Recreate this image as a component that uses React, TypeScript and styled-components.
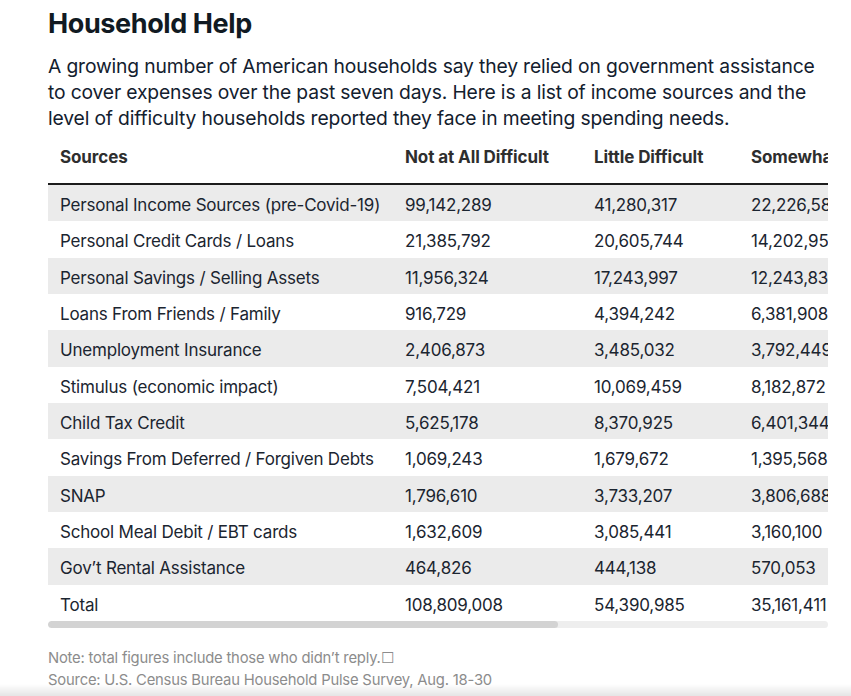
import React from 'react';
import styled, { createGlobalStyle } from 'styled-components';

interface IRow {
  source: string;
  values: string[];
}

const columns = ['Not at All Difficult', 'Little Difficult', 'Somewhat Difficult', 'Very Difficult'];

const rows: IRow[] = [
  { source: 'Personal Income Sources (pre-Covid-19)', values: ['99,142,289', '41,280,317', '22,226,581', '11,603,412'] },
  { source: 'Personal Credit Cards / Loans', values: ['21,385,792', '20,605,744', '14,202,957', '8,417,213'] },
  { source: 'Personal Savings / Selling Assets', values: ['11,956,324', '17,243,997', '12,243,830', '6,904,112'] },
  { source: 'Loans From Friends / Family', values: ['916,729', '4,394,242', '6,381,908', '5,338,716'] },
  { source: 'Unemployment Insurance', values: ['2,406,873', '3,485,032', '3,792,449', '3,101,597'] },
  { source: 'Stimulus (economic impact)', values: ['7,504,421', '10,069,459', '8,182,872', '5,013,664'] },
  { source: 'Child Tax Credit', values: ['5,625,178', '8,370,925', '6,401,344', '3,788,206'] },
  { source: 'Savings From Deferred / Forgiven Debts', values: ['1,069,243', '1,679,672', '1,395,568', '1,017,410'] },
  { source: 'SNAP', values: ['1,796,610', '3,733,207', '3,806,688', '3,522,934'] },
  { source: 'School Meal Debit / EBT cards', values: ['1,632,609', '3,085,441', '3,160,100', '2,448,012'] },
  { source: 'Gov\u2019t Rental Assistance', values: ['464,826', '444,138', '570,053', '622,471'] },
  { source: 'Total', values: ['108,809,008', '54,390,985', '35,161,411', '24,106,233'] },
];

const VIEW_WIDTH = 780;
const TABLE_WIDTH = 1193;

const App: React.FunctionComponent = () => (
  <Page>
    <GlobalStyle />
    <Title>Household Help</Title>
    <Intro>
      A growing number of American households say they relied on government assistance to cover expenses over the past
      seven days. Here is a list of income sources and the level of difficulty households reported they face in meeting
      spending needs.
    </Intro>
    <TableScroll>
      <Table>
        <colgroup>
          <col style={{ width: 345 }} />
          <col style={{ width: 189 }} />
          <col style={{ width: 157 }} />
          <col style={{ width: 250 }} />
          <col />
        </colgroup>
        <thead>
          <tr>
            <HeadCell>Sources</HeadCell>
            {columns.map((c) => (
              <HeadCell key={c}>{c}</HeadCell>
            ))}
          </tr>
        </thead>
        <tbody>
          {rows.map((r, i) => (
            <Row key={r.source} shaded={i % 2 === 0 && i < rows.length - 1}>
              <Cell>{r.source}</Cell>
              {r.values.map((v, j) => (
                <Cell key={j}>{v}</Cell>
              ))}
            </Row>
          ))}
        </tbody>
      </Table>
    </TableScroll>
    <ScrollTrack>
      <ScrollThumb style={{ width: (VIEW_WIDTH * VIEW_WIDTH) / TABLE_WIDTH }} />
    </ScrollTrack>
    <Notes>
      <Note>Note: total figures include those who didn{'\u2019'}t reply.{'\u2610'}</Note>
      <Note>Source: U.S. Census Bureau Household Pulse Survey, Aug. 18-30</Note>
    </Notes>
    <BottomShade />
  </Page>
);

const GlobalStyle = createGlobalStyle`
  body {
    margin: 0;
    background: #ffffff;
    font-family: Inter, "Noto Sans", sans-serif;
  }
`;

const Page = styled.div`
  width: ${VIEW_WIDTH}px;
  padding: 7px 0 0 48px;
`;

const Title = styled.h1`
  margin: 0;
  color: #111a22;
  font-size: 27px;
  font-weight: 700;
  line-height: 34px;
  letter-spacing: -0.4px;
`;

const Intro = styled.p`
  margin: 12px 0 0;
  color: #13202e;
  font-size: 19.3px;
  font-weight: 400;
  line-height: 26px;
  letter-spacing: -0.15px;
`;

const TableScroll = styled.div`
  width: ${VIEW_WIDTH}px;
  margin-top: 6px;
  overflow: hidden;
`;

const Table = styled.table`
  width: ${TABLE_WIDTH}px;
  border-collapse: collapse;
  table-layout: fixed;
`;

const HeadCell = styled.th`
  height: 40px;
  padding: 0 12px 6px;
  border-bottom: 2px solid #1c1c1c;
  color: #2e2e2e;
  font-size: 17px;
  font-weight: 700;
  text-align: left;
  white-space: nowrap;
  letter-spacing: -0.1px;
  vertical-align: middle;
`;

const Row = styled.tr<{ shaded: boolean }>`
  background: ${(p) => (p.shaded ? '#ebebeb' : '#ffffff')};
`;

const Cell = styled.td`
  height: 32.33px;
  padding: 4px 12px 0;
  color: #1b2530;
  font-size: 17px;
  font-weight: 400;
  white-space: nowrap;
  letter-spacing: -0.2px;
  vertical-align: middle;
`;

const ScrollTrack = styled.div`
  width: ${VIEW_WIDTH}px;
  height: 7px;
  border-radius: 4px;
  background: #eeeeee;
  overflow: hidden;
`;

const ScrollThumb = styled.div`
  height: 100%;
  border-radius: 4px;
  background: #d3d3d3;
`;

const Notes = styled.div`
  margin-top: 19px;
`;

const Note = styled.p`
  margin: 0;
  color: #8c8c8c;
  font-size: 14.8px;
  line-height: 22px;
  letter-spacing: -0.2px;
`;

const BottomShade = styled.div`
  position: fixed;
  left: 0;
  right: 0;
  bottom: 0;
  height: 12px;
  background: linear-gradient(to bottom, rgba(0, 0, 0, 0), rgba(0, 0, 0, 0.1));
  pointer-events: none;
`;

export default App;
